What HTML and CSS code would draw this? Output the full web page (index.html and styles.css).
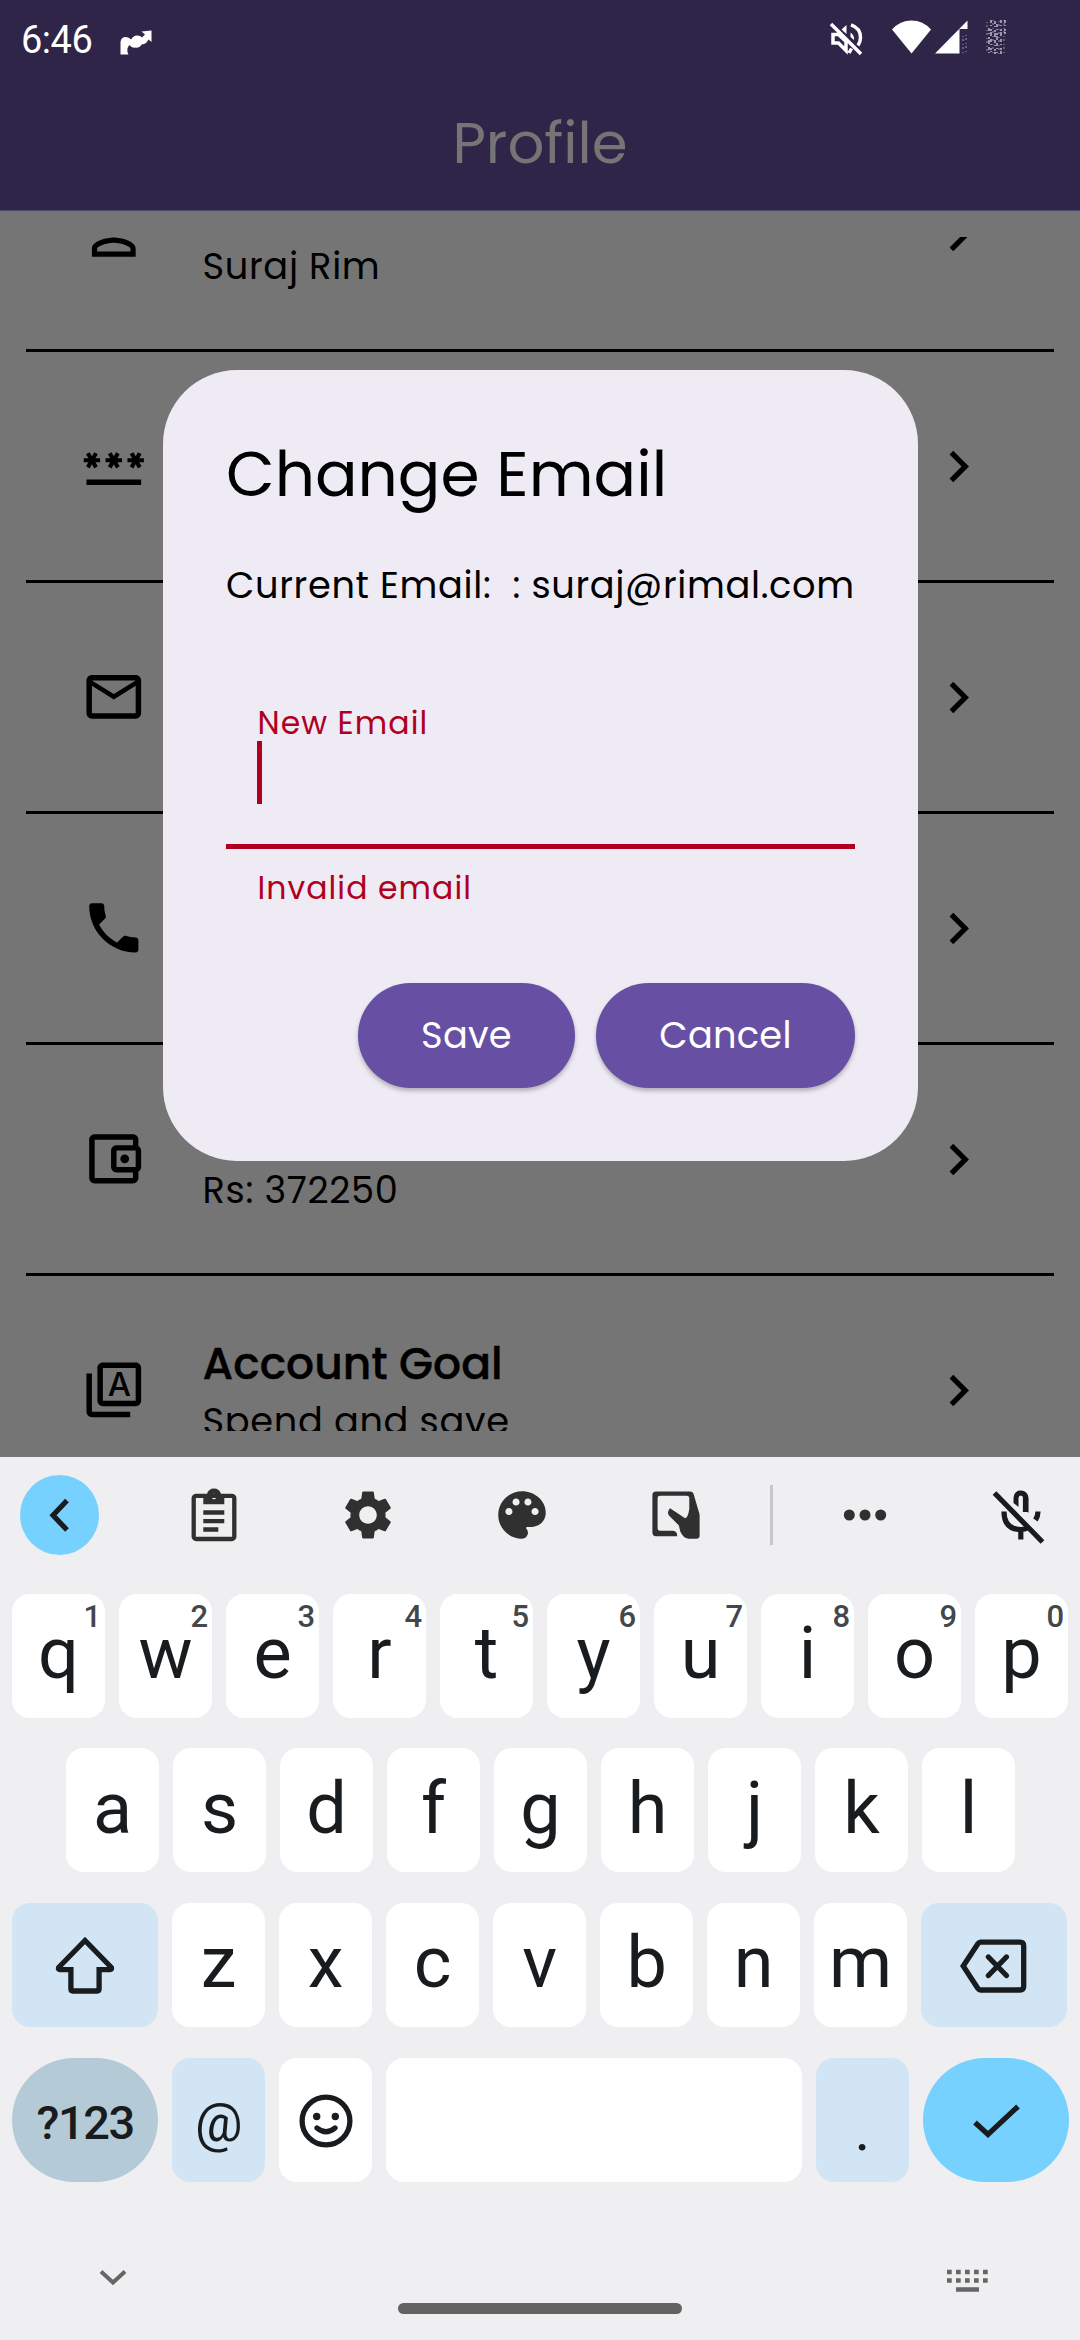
FILE: index.html
```html
<!DOCTYPE html>
<html lang="en">
<head>
<meta charset="utf-8">
<title>Profile</title>
<link rel="stylesheet" href="styles.css">
</head>
<body>
<div class="screen">
  <header class="app-header">
    <div class="status-bar">
      <span class="clock">6:46</span>
      <svg class="notif" viewBox="0 0 32 26" width="32" height="26"><path d="M0.5 24.5V12Q1 7 6 7Q9 7 11 9.500Q14 5 17.500 5.500Q20.500 5.500 22 7.500L25 4.500L21.500 1.500L31.500 0.500V12L28.500 9.500Q25.500 15 22.500 14Q19 18.500 15.500 17.500Q12 18.500 9.500 15Q5.500 19 8.500 24.500Z"/></svg>
      <span class="spacer"></span>
      <svg class="mute" viewBox="0 0 34 34" width="34" height="34"><path class="line" d="M2 2L32 32M4 12.500V21H9.500L17 28.500V19.500L9.500 12.500ZM22 2.800Q31.500 6 31.500 15.500Q31.500 20 29 23.500M22.500 26.500L20 31"/><path d="M12.500 7.500L17.500 3V12ZM21.500 10.500Q25.500 13 25 18L21.500 15Z"/></svg>
      <svg class="wifi" viewBox="0 0 39 34" width="39" height="34"><path d="M0 9.500Q8 0.500 19.500 0.500T39 9.500L19.500 33.500Z"/></svg>
      <svg class="signal" viewBox="0 0 33 34" width="33" height="34"><path d="M0 33.500L32.500 0.500V9H24.500V33.500Z"/><path class="noise dim" d="M28 16V33M31 15V32"/></svg>
      <svg class="battery" viewBox="0 0 20 34" width="20" height="34"><path class="noise dim" d="M1 2V33M7 0V34M13 1V34M18 0V33"/><path class="noise" d="M3 8V34M5 0V32M9 1V34M11 4V33M15 0V34M19 0V14"/></svg>
    </div>
    <h1 class="app-title">Profile</h1>
  </header>

  <main class="profile-list">
    <div class="row">
      <svg class="row-icon" viewBox="0 0 24 24"><path d="M12 5.900c1.160 0 2.100.94 2.100 2.100s-.94 2.100-2.100 2.100S9.900 9.160 9.900 8s.94-2.100 2.100-2.100m0 9c2.970 0 6.100 1.460 6.100 2.100v1.100H5.900V17c0-.64 3.130-2.100 6.100-2.100M12 4C9.790 4 8 5.790 8 8s1.790 4 4 4 4-1.790 4-4-1.790-4-4-4zm0 9c-2.670 0-8 1.340-8 4v3h16v-3c0-2.660-5.330-4-8-4z"/></svg>
      <div class="row-text"><div class="row-title"></div><div class="row-sub">Suraj Rim</div></div>
      <svg class="chevron" viewBox="0 0 24 24"><path d="M8.590 16.590L13.170 12 8.590 7.410 10 6l6 6-6 6z"/></svg>
    </div>
    <div class="row">
      <svg class="row-icon" viewBox="0 0 24 24"><path d="M2 17h20v2H2v-2zm1.150-4.050L4 11.470l.85 1.480 1.300-.75-.85-1.480H7v-1.500H5.300l.85-1.470L4.850 7 4 8.470 3.150 7l-1.300.75.85 1.470H1v1.500h1.700L1.850 12.200l1.300.75zm6.700-.75l1.300.75.85-1.480.85 1.480 1.300-.75-.85-1.480H15v-1.500h-1.700l.85-1.470-1.300-.75L12 8.470 11.150 7l-1.300.75.85 1.470H9v1.500h1.700l-.85 1.480zM23 9.220h-1.700l.85-1.470-1.300-.75L20 8.470 19.150 7l-1.300.75.85 1.470H17v1.500h1.700l-.85 1.480 1.300.75.85-1.480.85 1.480 1.300-.75-.85-1.480H23v-1.500z"/></svg>
      <div class="row-text"></div>
      <svg class="chevron" viewBox="0 0 24 24"><path d="M8.590 16.590L13.170 12 8.590 7.410 10 6l6 6-6 6z"/></svg>
    </div>
    <div class="row">
      <svg class="row-icon" viewBox="0 0 24 24"><path d="M22 6c0-1.100-.9-2-2-2H4c-1.100 0-2 .9-2 2v12c0 1.100.9 2 2 2h16c1.100 0 2-.9 2-2V6zm-2 0l-8 5-8-5h16zm0 12H4V8l8 5 8-5v10z"/></svg>
      <div class="row-text"></div>
      <svg class="chevron" viewBox="0 0 24 24"><path d="M8.590 16.590L13.170 12 8.590 7.410 10 6l6 6-6 6z"/></svg>
    </div>
    <div class="row">
      <svg class="row-icon" viewBox="0 0 24 24"><path d="M6.620 10.790c1.440 2.830 3.760 5.140 6.590 6.590l2.200-2.200c.27-.27.67-.36 1.020-.24 1.120.37 2.330.57 3.570.57.55 0 1 .45 1 1V20c0 .55-.45 1-1 1-9.390 0-17-7.610-17-17 0-.55.45-1 1-1h3.500c.55 0 1 .45 1 1 0 1.250.2 2.450.57 3.570.11.35.03.74-.25 1.020l-2.200 2.200z"/></svg>
      <div class="row-text"></div>
      <svg class="chevron" viewBox="0 0 24 24"><path d="M8.590 16.590L13.170 12 8.590 7.410 10 6l6 6-6 6z"/></svg>
    </div>
    <div class="row">
      <svg class="row-icon" viewBox="0 0 24 24"><path d="M21 7.280V5c0-1.100-.9-2-2-2H5c-1.110 0-2 .9-2 2v14c0 1.100.89 2 2 2h14c1.100 0 2-.9 2-2v-2.280c.59-.35 1-.98 1-1.720V9c0-.74-.41-1.370-1-1.720zM20 9v6h-7V9h7zM5 19V5h14v2h-6c-1.100 0-2 .9-2 2v6c0 1.100.9 2 2 2h6v2H5z"/><circle cx="16" cy="12" r="1.600"/></svg>
      <div class="row-text"><div class="row-title"></div><div class="row-sub">Rs: 372250</div></div>
      <svg class="chevron" viewBox="0 0 24 24"><path d="M8.590 16.590L13.170 12 8.590 7.410 10 6l6 6-6 6z"/></svg>
    </div>
    <div class="row">
      <svg class="row-icon" viewBox="0 0 24 24"><path d="M20 2H8c-1.100 0-2 .9-2 2v12c0 1.100.9 2 2 2h12c1.100 0 2-.9 2-2V4c0-1.100-.9-2-2-2zm0 14H8V4h12v12zM4 6H2v14c0 1.100.9 2 2 2h14v-2H4V6z"/><text class="icon-letter" x="14" y="14.400">A</text></svg>
      <div class="row-text"><div class="row-title">Account Goal</div><div class="row-sub">Spend and save</div></div>
      <svg class="chevron" viewBox="0 0 24 24"><path d="M8.590 16.590L13.170 12 8.590 7.410 10 6l6 6-6 6z"/></svg>
    </div>
  </main>

  <section class="dialog">
    <h2 class="dialog-title">Change Email</h2>
    <p class="current">Current Email:  : suraj@rimal.com</p>
    <div class="field">
      <div class="field-label">New Email</div>
      <div class="caret"></div>
    </div>
    <div class="field-error">Invalid email</div>
    <div class="actions">
      <div class="btn save">Save</div>
      <div class="btn cancel">Cancel</div>
    </div>
  </section>

  <section class="keyboard">
    <div class="toolbar">
      <div class="tool back"><svg viewBox="0 0 60 60"><path class="ink-line thick" d="M37 15.500L23 30.300L37 45"/></svg></div>
      <div class="tool"><svg viewBox="0 0 60 60"><rect class="tool-line" x="9.700" y="10.800" width="40.600" height="43.200" rx="2.500"/><path class="tool-fill" fill-rule="evenodd" d="M19.300 9H23Q24.500 3.500 30 3.500T37 9H40.300V19.200H19.300ZM30 8.700a2.500 2.800 0 1 0 0.010 0Z"/><path class="tool-line" d="M19.300 27.500H40.300M19.300 36.200H40.300M19.300 44.500H34.300"/></svg></div>
      <div class="tool"><svg viewBox="0 0 24 24"><path class="tool-fill" transform="translate(0.300 0.300) scale(0.975)" d="M19.140 12.940c.04-.3.060-.61.060-.94 0-.32-.02-.64-.07-.94l2.030-1.580c.18-.14.23-.41.120-.61l-1.920-3.320c-.12-.22-.37-.29-.59-.22l-2.390.96c-.5-.38-1.030-.7-1.620-.94l-.36-2.540c-.04-.24-.24-.41-.48-.41h-3.840c-.24 0-.43.17-.47.41l-.36 2.540c-.59.24-1.130.57-1.620.94l-2.390-.96c-.22-.08-.47 0-.59.22L2.740 8.870c-.12.21-.08.47.12.61l2.030 1.580c-.05.3-.09.63-.09.94s.02.64.07.94l-2.030 1.580c-.18.14-.23.41-.12.61l1.920 3.320c.12.22.37.29.59.22l2.390-.96c.5.38 1.030.7 1.620.94l.36 2.540c.05.24.24.41.48.41h3.840c.24 0 .44-.17.47-.41l.36-2.540c.59-.24 1.130-.56 1.620-.94l2.390.96c.22.08.47 0 .59-.22l1.920-3.320c.12-.22.07-.47-.12-.61l-2.010-1.580zM12 15.600c-1.980 0-3.600-1.620-3.600-3.600s1.620-3.600 3.600-3.600 3.600 1.620 3.600 3.600-1.620 3.600-3.600 3.600z"/></svg></div>
      <div class="tool"><svg viewBox="0 0 24 24"><path class="tool-fill" transform="translate(0.600 0.600) scale(0.95)" d="M12 2C6.490 2 2 6.490 2 12s4.490 10 10 10c1.380 0 2.500-1.120 2.500-2.500 0-.61-.23-1.200-.64-1.670-.08-.1-.13-.21-.13-.33 0-.28.22-.5.500-.5H16c3.310 0 6-2.690 6-6 0-4.960-4.490-9-10-9zM6.500 12c-.83 0-1.500-.67-1.500-1.500S5.670 9 6.500 9 8 9.670 8 10.500 7.330 12 6.500 12zm3-4C8.670 8 8 7.330 8 6.500S8.670 5 9.500 5s1.500.67 1.500 1.500S10.330 8 9.500 8zm5 0c-.83 0-1.500-.67-1.500-1.500S13.670 5 14.500 5s1.500.67 1.500 1.500S15.330 8 14.500 8zm3 4c-.83 0-1.500-.67-1.500-1.500S16.670 9 17.500 9s1.500.67 1.500 1.500-.67 1.500-1.500 1.500z"/></svg></div>
      <div class="tool"><svg viewBox="0 0 60 60"><path class="tool-fill" d="M10 6.500H44.500Q47 6.500 47.600 9L53.600 29.500V50.500Q53.600 53.800 50.300 53.800H42.600Q37 53 34.300 46.500L32.900 40.500L23 30.500Q20.500 27 24 23.200L39.100 33.200Q42 33 43.300 23.800V13.500Q43.300 10.800 40.800 10.800H14Q11.600 10.800 11.600 13V43.500Q11.600 45.800 14 45.800H27Q31.200 46 31.200 51.200H10Q6.400 51.200 6.400 47.500V10Q6.400 6.500 10 6.500Z"/></svg></div>
      <div class="divider"></div>
      <div class="tool dots"><svg viewBox="0 0 60 60"><g class="tool-fill"><circle cx="14.300" cy="30" r="5.500"/><circle cx="30" cy="30" r="5.500"/><circle cx="45.700" cy="30" r="5.500"/></g></svg></div>
      <div class="tool mic"><svg viewBox="0 0 60 60"><path class="ink-line thick" d="M5.500 8L53.500 57M15 26.500Q15 44.500 32 44.500Q36 44.500 39 42.800M31.800 44V54.500M49 26.500Q49 31 46.500 35M36.500 13V27"/><path d="M24.500 18V13Q25 5.500 31.800 5.500T39.500 13V28L34 22.500V13Q34 10.500 31.800 10.500T29.500 13V22Z"/></svg></div>
    </div>

    <div class="keys">
      <div class="key-row">
        <div class="key">q<i>1</i></div><div class="key">w<i>2</i></div><div class="key">e<i>3</i></div><div class="key">r<i>4</i></div><div class="key">t<i>5</i></div><div class="key">y<i>6</i></div><div class="key">u<i>7</i></div><div class="key">i<i>8</i></div><div class="key">o<i>9</i></div><div class="key">p<i>0</i></div>
      </div>
      <div class="key-row inset">
        <div class="key">a</div><div class="key">s</div><div class="key">d</div><div class="key">f</div><div class="key">g</div><div class="key">h</div><div class="key">j</div><div class="key">k</div><div class="key">l</div>
      </div>
      <div class="key-row">
        <div class="key wide tint icon"><svg width="60" height="60" viewBox="0 0 60 60"><path class="ink-line" d="M30 4.500L3.600 31.500Q3 33.700 5 33.700H15.900V53q0 2 2 2H42.100q2 0 2-2V33.700H55Q57 33.700 56.400 31.500Z"/></svg></div><div class="key">z</div><div class="key">x</div><div class="key">c</div><div class="key">v</div><div class="key">b</div><div class="key">n</div><div class="key">m</div><div class="key wide tint icon"><svg width="68" height="54" viewBox="0 0 68 54"><path class="ink-line" d="M20.500 3.200H60q3.700 0 3.700 3.700V47.300q0 3.700-3.700 3.700H20.500q-1.500 0-2.600-1.500L3.200 27 17.900 4.700q1-1.500 2.600-1.500Z"/><path class="ink-line round" d="M28.400 18l18 18.500M46.400 18l-18 18.500"/></svg></div>
      </div>
      <div class="key-row">
        <div class="key wide pill sym">?123</div><div class="key tint at">@</div><div class="key icon"><svg width="54" height="54" viewBox="0 0 54 54"><circle class="ink-line" cx="27" cy="27" r="23.900"/><circle cx="17.700" cy="22.500" r="3.700"/><circle cx="36.300" cy="22.500" r="3.700"/><path class="ink-line round" d="M18 34Q27 41.500 36 34"/></svg></div><div class="key space"></div><div class="key tint dot">.</div><div class="key wide pill enter icon"><svg width="60" height="60" viewBox="0 0 60 60"><path class="ink-line" d="M9 31.500L22 43.500L52 15.500"/></svg></div>
      </div>
    </div>

    <div class="nav">
      <svg width="28" height="18" viewBox="0 0 28 18"><path class="nav-line" d="M2 2.500L14 13.500L26 2.500"/></svg>
      <div class="home"></div>
      <svg width="41" height="24" viewBox="0 0 41 24"><path class="nav-dots" d="M0 3H41M0 11.500H41"/><path class="nav-bar" d="M9 20.500H32"/></svg>
    </div>
  </section>
</div>
</body>
</html>
```

FILE: styles.css
```css
* { box-sizing: border-box; margin: 0; padding: 0; }
body { width: 1080px; height: 2340px; overflow: hidden; background: #757575; font-family: Poppins, Inter, sans-serif; color: #000; }
svg { display: block; flex: none; overflow: visible; }
.screen { position: relative; display: flex; flex-direction: column; width: 1080px; height: 2340px; }

/* header */
.app-header { height: 211px; background: #2f2549; border-bottom: 1px solid #51496a; color: #757575; }
.status-bar { display: flex; align-items: flex-start; height: 75px; padding: 20px 74px 0 21px; fill: #fff; }
.clock { font: 400 38px/40px Roboto, sans-serif; letter-spacing: -0.500px; color: #fff; width: 99px; }
.notif { margin-top: 10px; }
.spacer { flex: 1; }
.mute { margin: 2px 29px 0 0; }
.mute .line { fill: none; stroke: #fff; stroke-width: 3.500; }
.wifi { margin-right: 4px; }
.signal { margin-right: 18px; }
.noise { fill: none; stroke: #e4e2ea; stroke-width: 1.200; stroke-dasharray: 3 2 1 3 2 1 4 3; }
.noise.dim { stroke: #8b849c; stroke-dasharray: 1 2 2 3; }
.app-title { font-size: 57.750px; font-weight: 400; line-height: 135px; text-align: center; }

/* list */
.profile-list { height: 1194px; margin: 26px 26px 0; overflow: hidden; }
.row { display: flex; align-items: center; height: 231px; padding: 0 64px 0 55px; border-bottom: 3px solid #000; }
.row:first-child { margin-top: -116px; }
.row-icon { width: 65.600px; height: 65.600px; }
.icon-letter { font: 500 12px Inter, sans-serif; text-anchor: middle; }
.row-text { flex: 1; margin-left: 56px; white-space: nowrap; }
.row-title { height: 60px; font-size: 44px; line-height: 61px; font-weight: 500; -webkit-text-stroke: 0.400px #000; }
.row-sub { height: 55px; font-size: 36.750px; line-height: 56px; letter-spacing: 0.660px; }
.chevron { width: 63px; height: 63px; }

/* dialog */
.dialog { position: absolute; left: 163px; top: 370px; width: 755px; height: 791px; padding: 63px; border-radius: 74px; background: #eeebf5; }
.dialog-title { font-size: 63px; font-weight: 400; line-height: 83px; white-space: nowrap; }
.current { margin-top: 43px; font-size: 36.750px; line-height: 52px; letter-spacing: 0.660px; white-space: pre; }
.field { height: 143px; margin-top: 95px; padding-left: 31.500px; border-bottom: 5px solid #b00020; color: #b00020; }
.field-label { font-size: 31.500px; line-height: 34px; letter-spacing: 1.050px; }
.caret { width: 5px; height: 63px; margin: 1px 0 0 -1px; background: #b00020; }
.field-error { margin-top: 19px; padding-left: 31.500px; font-size: 31.500px; line-height: 40px; letter-spacing: 1.050px; color: #b00020; }
.actions { display: flex; justify-content: flex-end; gap: 21px; margin-top: 75px; }
.btn { height: 105px; border-radius: 53px; background: #6750a3; color: #fff; font-size: 36.750px; line-height: 105px; text-align: center; letter-spacing: 0.260px; box-shadow: 0 3px 4px rgba(0, 0, 0, 0.250); }
.save { width: 217px; }
.cancel { width: 259px; }

/* keyboard */
.keyboard { height: 883px; margin-top: 26px; background: #efeff1; color: #191c1e; fill: #191c1e; }
.toolbar { display: flex; align-items: center; height: 115px; padding: 0 31px 0 20px; }
.tool { width: 60px; margin-left: 94px; }
.tool svg { width: 60px; height: 60px; }
.tool.back { display: flex; align-items: center; justify-content: center; width: 79px; height: 80px; margin-left: 0; border-radius: 50%; background: #77d1ff; }
.tool.back + .tool { margin-left: 85px; }
.divider { width: 3px; height: 60px; margin-left: 63.500px; background: #c8c8ca; }
.tool.dots { margin-left: 62.500px; }
.tool.mic { margin-left: 94px; }
.tool-fill { fill: #303030; }
.tool-line { fill: none; stroke: #303030; stroke-width: 4.300; }
.ink-line { fill: none; stroke: #191c1e; stroke-width: 5.300; }
.ink-line.round { stroke-linecap: round; }
.thick { stroke-width: 5.200; }

.keys { display: grid; gap: 30.700px; padding: 21.500px 12px 0; }
.key-row { display: flex; gap: 14px; height: 124px; }
.key-row.inset { padding: 0 54px; }
.key { position: relative; display: flex; align-items: center; justify-content: center; flex: 0 0 93px; padding-bottom: 3px; border-radius: 18px; background: #fff; font: 400 72px/84px Roboto, sans-serif; }
.key i { position: absolute; right: 4px; top: 3px; font: 500 31px/40px Roboto, sans-serif; color: #444749; }
.key.wide { flex-basis: 146.200px; }
.key.icon { padding: 2px 0 0; }
.key.tint { background: #d2e5f4; }
.key.pill { border-radius: 62px; }
.key.sym { padding: 6px 0 0; background: #b4cad7; font-weight: 500; font-size: 47px; letter-spacing: -1.500px; }
.key.at { padding: 7px 0 0; font-size: 53px; }
.key.space { flex: 1; }
.key.dot { padding: 20px 0 0; font-size: 60px; }
.key.enter { background: #77d1ff; }

.nav { display: flex; align-items: flex-start; padding: 87px 92px 0 99px; }
.home { width: 284px; height: 11px; margin: 34px auto 0 271px; border-radius: 6px; background: #636363; }
.nav-line { fill: none; stroke: #666; stroke-width: 4; }
.nav-dots { fill: none; stroke: #666; stroke-width: 4.500; stroke-dasharray: 4.700 4.300; }
.nav-bar { fill: none; stroke: #666; stroke-width: 4.500; }
```
